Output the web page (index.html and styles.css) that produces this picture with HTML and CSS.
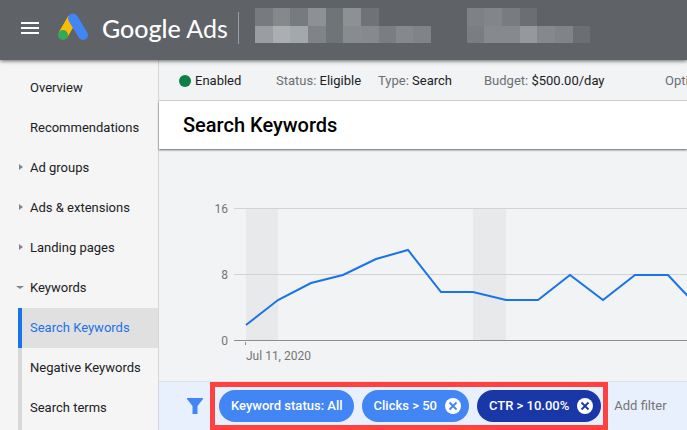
FILE: index.html
```
<!DOCTYPE html>
<html lang="en">
<head>
<meta charset="utf-8">
<meta name="viewport" content="width=device-width, initial-scale=1">
<title>Search Keywords - Google Ads</title>
<link rel="stylesheet" href="styles.css">
</head>
<body>
<header class="topbar">
  <button class="menu" type="button" aria-label="Main menu">
    <svg width="20" height="14" viewBox="0 0 20 14"><path d="M1 2h18M1 7h18M1 12h18" stroke="#fff" stroke-width="2"/></svg>
  </button>
  <a class="brand" href="#">
    <svg class="mark" width="32" height="28" viewBox="0 0 32 28">
      <path d="M14.500 5.500L5 22" stroke="#fbbc04" stroke-width="10"/>
      <path d="M15 5.500L25 22" stroke="#4285f4" stroke-width="10" stroke-linecap="round"/>
      <circle cx="5" cy="22" r="5" fill="#34a853"/>
    </svg>
    <span class="wordmark"><b>Google</b> Ads</span>
  </a>
  <svg class="account" width="176" height="35" shape-rendering="crispEdges">
    <path fill="#777a7e" d="M0 0h18v18H0zM35 0h18v18H35z"/>
    <path fill="#85898b" d="M18 0h17v18H18z"/>
    <path fill="#8d9095" d="M53 0h18v18H53z"/>
    <path fill="#6f7477" d="M71 0h17v35H71z"/>
    <path fill="#8d9193" d="M88 0h18v18H88z"/>
    <path fill="#6f7277" d="M106 0h18v18h-18z"/>
    <path fill="#9c9da0" d="M0 18h18v17H0z"/>
    <path fill="#adaeb1" d="M18 18h17v17H18z"/>
    <path fill="#a3a8aa" d="M35 18h18v17H35z"/>
    <path fill="#808388" d="M53 18h18v17H53zM158 18h18v17h-18z"/>
    <path fill="#888c8f" d="M88 18h18v17H88z"/>
    <path fill="#87898e" d="M106 18h18v17h-18z"/>
    <path fill="#7a7d81" d="M124 18h17v17h-17z"/>
    <path fill="#85898b" d="M141 18h17v17h-17z"/>
  </svg>
  <svg class="account customer" width="123" height="35" shape-rendering="crispEdges">
    <path fill="#7e8185" d="M0 0h17v18H0z"/>
    <path fill="#828589" d="M17 0h18v18H17z"/>
    <path fill="#787b80" d="M35 0h18v18H35z"/>
    <path fill="#6b6e73" d="M53 0h17v18H53zM106 18h17v17h-17z"/>
    <path fill="#7a7d81" d="M0 18h17v17H0z"/>
    <path fill="#87898e" d="M17 18h36v17H17z"/>
    <path fill="#97989c" d="M53 18h17v17H53z"/>
    <path fill="#85898c" d="M70 18h18v17H70z"/>
    <path fill="#808388" d="M88 18h18v17H88z"/>
  </svg>
</header>
<div class="layout">
  <nav class="sidebar">
    <ul class="pages">
      <li><a href="#">Overview</a></li>
      <li><a href="#">Recommendations</a></li>
      <li class="group"><a href="#">Ad groups</a></li>
      <li class="group"><a href="#">Ads &amp; extensions</a></li>
      <li class="group"><a href="#">Landing pages</a></li>
      <li class="group open"><a href="#">Keywords</a></li>
    </ul>
    <ul class="subpages">
      <li><a class="current" href="#">Search Keywords</a></li>
      <li><a href="#">Negative Keywords</a></li>
      <li><a href="#">Search terms</a></li>
    </ul>
  </nav>
  <main class="content">
    <div class="status">
      <span class="enabled">Enabled</span>
      <span class="kind"><i>Status:</i> Eligible</span>
      <span class="type"><i>Type:</i> Search</span>
      <span class="budget"><i>Budget:</i> $500.00/day</span>
      <span class="score"><i>Opti</i></span>
    </div>
    <h1>Search Keywords</h1>
    <svg class="chart" role="img" aria-label="Clicks per day from Jul 11, 2020">
      <path class="weekend" d="M87 59h32v132H87zM314 59h33v132h-33z"/>
      <rect class="grid" x="75" y="58" width="100%" height="1"/>
      <rect class="grid" x="75" y="124" width="100%" height="1"/>
      <rect class="axis" x="75" y="190" width="100%" height="1"/>
      <rect class="axis" x="86" y="192" width="1" height="3"/>
      <polyline class="series" points="87,175 119,150 152,133 184,125 217,109 249,100 282,142 314,142 347,150 379,150 411,125 444,150 476,125 509,125 541,159"/>
      <text x="69" y="63" text-anchor="end">16</text>
      <text x="69" y="129" text-anchor="end">8</text>
      <text x="69" y="195" text-anchor="end">0</text>
      <text x="87" y="210">Jul 11, 2020</text>
    </svg>
    <div class="filters">
      <svg class="funnel" width="16" height="16" viewBox="0 0 16 16"><path d="M0 0h16v1l-5.500 7v8h-5V8L0 1z" fill="#4285f4"/></svg>
      <div class="chips">
        <button class="chip" type="button">Keyword status: All</button>
        <button class="chip" type="button">Clicks &gt; 50
          <svg width="16" height="16" viewBox="0 0 16 16"><circle cx="8" cy="8" r="8" fill="#fff"/><path d="M4.500 4.500l7 7M11.500 4.500l-7 7" stroke="#4285f4" stroke-width="1.800"/></svg>
        </button>
        <button class="chip dark" type="button">CTR &gt; 10.00%
          <svg width="16" height="16" viewBox="0 0 16 16"><circle cx="8" cy="8" r="8" fill="#fff"/><path d="M4.500 4.500l7 7M11.500 4.500l-7 7" stroke="#1a37a8" stroke-width="1.800"/></svg>
        </button>
      </div>
      <input class="add" type="text" placeholder="Add filter" aria-label="Add filter">
    </div>
  </main>
</div>
</body>
</html>
```
FILE: styles.css
```
* {
  box-sizing: border-box;
}

body {
  margin: 0;
  min-height: 100vh;
  display: flex;
  flex-direction: column;
  overflow: hidden;
  background: #f1f3f4;
  color: #202124;
  font: 13px/16px Roboto, "Liberation Sans", sans-serif;
}

button,
input {
  border: 0;
  padding: 0;
  background: none;
  font: inherit;
}

a {
  color: inherit;
  text-decoration: none;
}

.topbar {
  position: relative;
  z-index: 1;
  display: flex;
  align-items: center;
  height: 60px;
  padding: 0 20px;
  background: #5f6368;
  box-shadow: 0 1px 4px rgba(0, 0, 0, 0.6);
}

.menu {
  display: flex;
  width: 20px;
  margin-right: 18px;
  padding-bottom: 4px;
}

.brand {
  display: flex;
  align-items: center;
  height: 32px;
  width: 181px;
  margin-bottom: 4px;
  border-right: 1px solid #9a9da0;
  color: #fff;
}

.mark {
  flex: none;
  margin-bottom: 2px;
}

.wordmark {
  margin-left: 12px;
  font: 400 25px/28px Lato, sans-serif;
  white-space: nowrap;
}

.wordmark b {
  font-weight: 500;
}

.account {
  flex: none;
  margin: 0 0 9px 16px;
}

.customer {
  margin-left: 36px;
}

.layout {
  flex: 1;
  display: flex;
}

.sidebar {
  flex: none;
  width: 159px;
  padding-top: 8px;
  display: flex;
  flex-direction: column;
  background: #f5f5f5;
  border-right: 1px solid #d5d6d8;
}

.pages,
.subpages {
  margin: 0;
  padding: 0;
  list-style: none;
}

.sidebar li {
  position: relative;
}

.sidebar a {
  display: block;
  padding: 12px 0 12px 30px;
  white-space: nowrap;
}

.group::before {
  content: "";
  position: absolute;
  left: 19px;
  top: 16px;
  border: solid transparent;
  border-width: 3px 0 3px 4px;
  border-left-color: #80868b;
}

.open::before {
  left: 16px;
  top: 18px;
  border-width: 3px 4px 0;
  border-color: #80868b transparent transparent;
}

.subpages {
  flex: 1;
  margin-left: 18px;
  background: linear-gradient(#d8d8d8, #d8d8d8) left / 4px 100% no-repeat;
}

.subpages a {
  padding-left: 12px;
}

.subpages .current {
  padding-left: 8px;
  border-left: 4px solid #1a73e8;
  background: #e0e0e0;
  color: #1a73e8;
}

.content {
  flex: 1;
  min-width: 0;
  display: flex;
  flex-direction: column;
}

.status {
  display: flex;
  align-items: center;
  height: 41px;
  padding: 1px 0 0 20px;
  border-bottom: 1px solid #d5d7da;
  white-space: nowrap;
  overflow: hidden;
}

.status span {
  flex: none;
}

.status i {
  font-style: normal;
  color: #6b6f74;
}

.enabled {
  display: flex;
  align-items: center;
  gap: 4px;
  width: 97px;
}

.enabled::before {
  content: "";
  width: 12px;
  height: 12px;
  border-radius: 50%;
  background: #0b8043;
}

.kind {
  width: 102px;
}

.type {
  width: 106px;
}

.budget {
  width: 181px;
}

h1 {
  position: relative;
  margin: 0;
  padding: 12px 24px;
  background: #fff;
  box-shadow: 0 1px 2px rgba(0, 0, 0, 0.6);
  color: #000;
  font-size: 20px;
  line-height: 24px;
  font-weight: 500;
}

.chart {
  display: block;
  width: 100%;
  height: 232px;
  padding-top: 1px;
  font-size: 12px;
}

.chart text {
  fill: #757575;
}

.weekend {
  fill: #e8e9ea;
}

.grid {
  fill: #d0d2d4;
}

.axis {
  fill: #8c8d90;
}

.series {
  fill: none;
  stroke: #1a73e8;
  stroke-width: 2;
}

.filters {
  flex: 1;
  display: flex;
  align-items: center;
  padding-left: 28px;
  border-top: 1px solid #dfe1e4;
  background: #e8f0fe;
}

.funnel {
  flex: none;
  margin-right: 7px;
}

.chips {
  flex: none;
  display: flex;
  gap: 8px;
  padding: 3px 2px 3px 4px;
  border: 5px solid #ff4141;
}

.chip {
  display: flex;
  align-items: center;
  gap: 8px;
  height: 32px;
  padding: 0 11px 0 12px;
  border-radius: 16px;
  background: #4285f4;
  color: #fff;
  font-weight: 500;
  white-space: nowrap;
}

.chip:has(svg) {
  padding-right: 8px;
}

.dark {
  background: #1a37a8;
}

.add {
  flex: 1;
  min-width: 0;
  margin-left: 6px;
}

.add::placeholder {
  color: #757575;
}
```
